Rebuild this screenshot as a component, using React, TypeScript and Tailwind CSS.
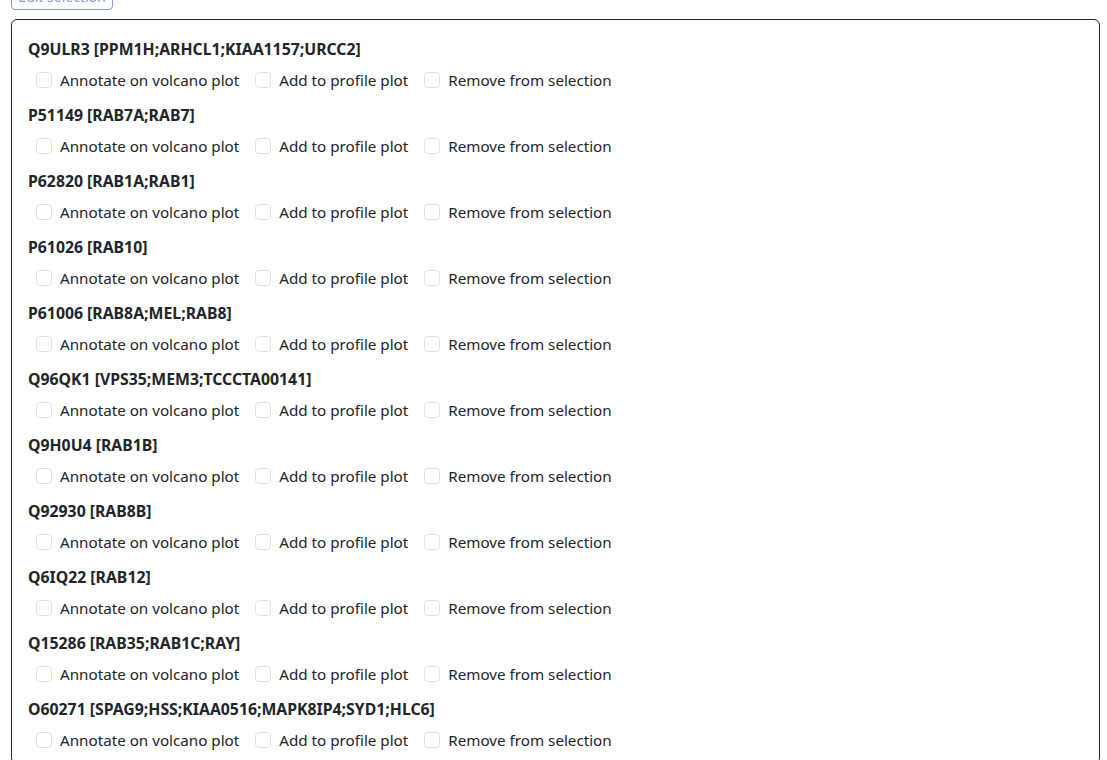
import React from 'react';

const proteins = [
  'Q9ULR3 [PPM1H;ARHCL1;KIAA1157;URCC2]',
  'P51149 [RAB7A;RAB7]',
  'P62820 [RAB1A;RAB1]',
  'P61026 [RAB10]',
  'P61006 [RAB8A;MEL;RAB8]',
  'Q96QK1 [VPS35;MEM3;TCCCTA00141]',
  'Q9H0U4 [RAB1B]',
  'Q92930 [RAB8B]',
  'Q6IQ22 [RAB12]',
  'Q15286 [RAB35;RAB1C;RAY]',
  'O60271 [SPAG9;HSS;KIAA0516;MAPK8IP4;SYD1;HLC6]',
];

const options = ['Annotate on volcano plot', 'Add to profile plot', 'Remove from selection'];

function Check({ label }: { label: string }) {
  return (
    <label className="mr-4 inline-flex items-center">
      <span className="mr-2 block h-4 w-4 rounded-[4px] border border-[#dee2e6] bg-white" />
      <span>{label}</span>
    </label>
  );
}

export default function App() {
  return (
    <div
      className="min-h-screen bg-white px-[11px] pr-[7px] text-[#212529]"
      style={{ fontFamily: '"Noto Sans", "Open Sans", sans-serif' }}
    >
      <button className="-mt-[18px] flex h-[28px] w-[102px] items-center justify-center whitespace-nowrap rounded-[4px] border border-[#7f9fe3] px-2 text-[14px] leading-[21px] text-[#7f9fe3]">
        Edit selection
      </button>

      <div className="mt-[9px] rounded-[6px] border border-[#212529] px-4 pt-[17px]">
        {proteins.map((p) => (
          <div key={p} className="mb-[11px]">
            <div className="mb-[7px] h-6 text-[15.8px] font-bold leading-6">{p}</div>
            <div className="flex h-6 items-center pl-2 text-[15.2px] leading-6">
              {options.map((o) => (
                <Check key={o} label={o} />
              ))}
            </div>
          </div>
        ))}
      </div>
    </div>
  );
}
